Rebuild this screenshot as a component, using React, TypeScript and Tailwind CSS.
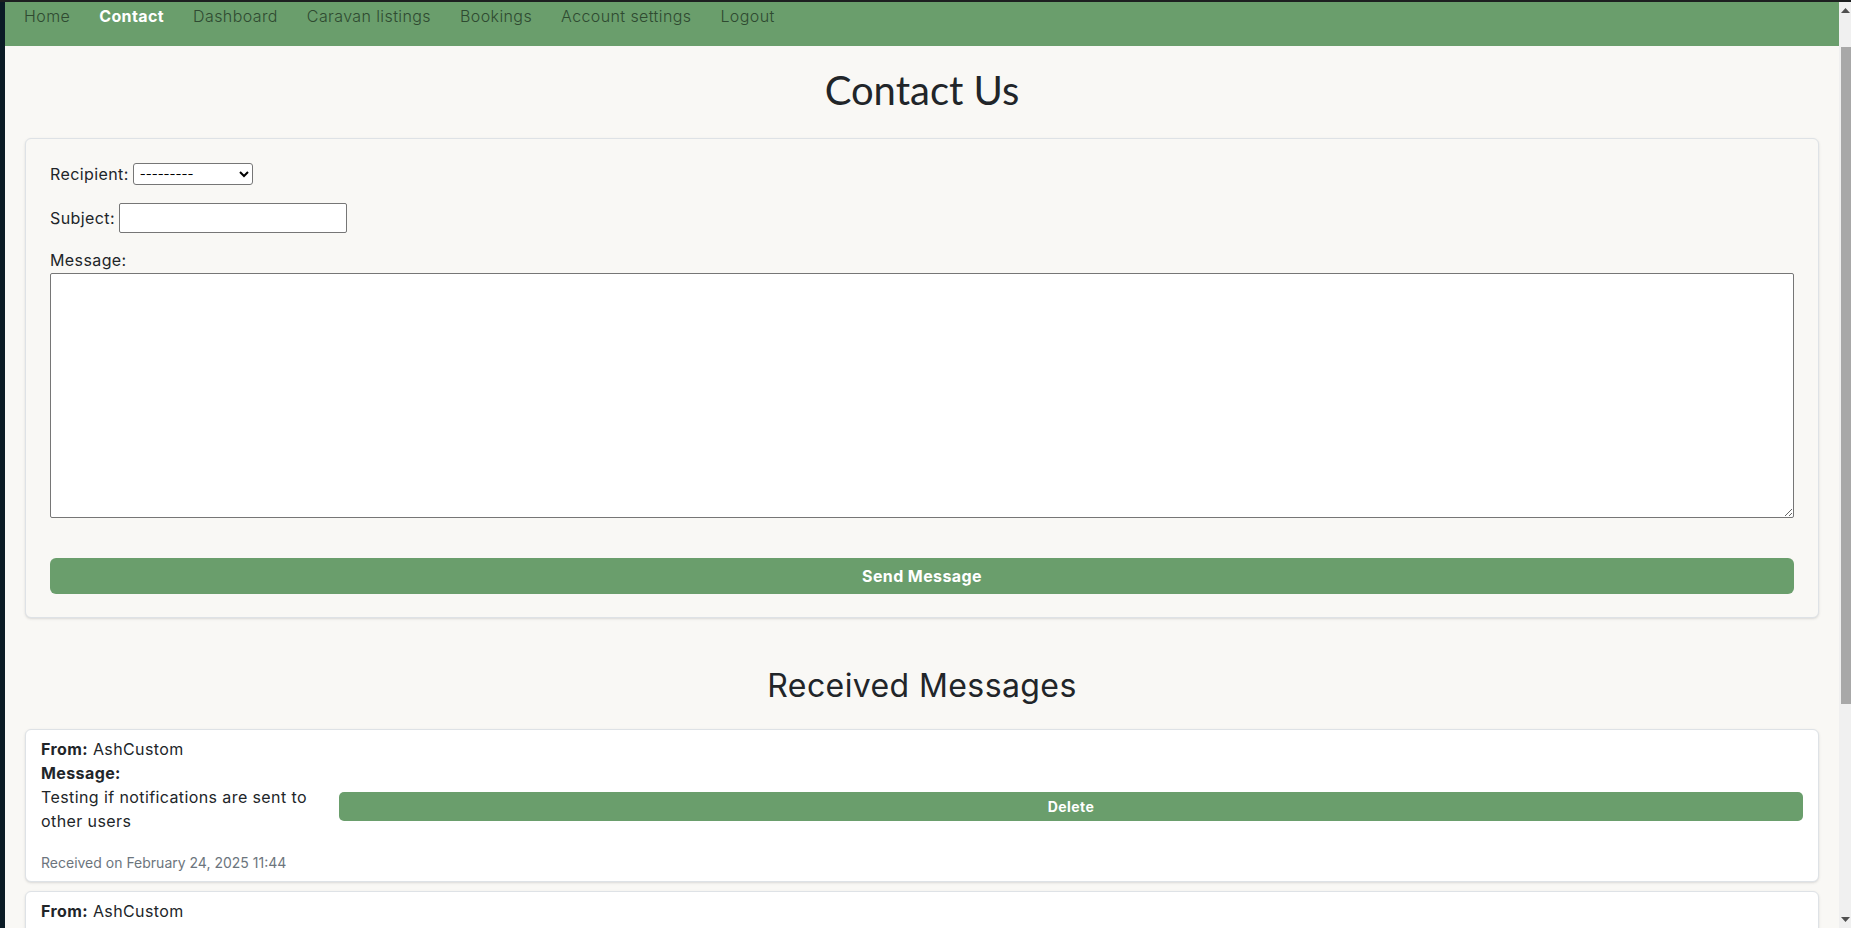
import React from "react";

const navLinks = [
  { label: "Home", active: false },
  { label: "Contact", active: true },
  { label: "Dashboard", active: false },
  { label: "Caravan listings", active: false },
  { label: "Bookings", active: false },
  { label: "Account settings", active: false },
  { label: "Logout", active: false },
];

const messages = [
  {
    from: "AshCustom",
    body: "Testing if notifications are sent to other users",
    received: "Received on February 24, 2025 11:44",
  },
  {
    from: "AshCustom",
    body: "Testing if notifications are sent to other users",
    received: "Received on February 24, 2025 11:40",
  },
];

function Scrollbar() {
  return (
    <div className="w-[12px] shrink-0 bg-[#f0f0f0] flex flex-col">
      <div className="h-[17px] flex items-center justify-center">
        <svg width="9" height="6" viewBox="0 0 9 6">
          <polygon points="4.5,0 9,5 0,5" fill="#505050" />
        </svg>
      </div>
      <div className="flex-1 flex flex-col">
        <div className="h-[28px]" />
        <div className="ml-[2px] h-[657px] bg-[#a8a8a8]" />
      </div>
      <div className="h-[17px] flex items-center justify-center">
        <svg width="9" height="6" viewBox="0 0 9 6">
          <polygon points="0,0 9,0 4.5,5" fill="#505050" />
        </svg>
      </div>
    </div>
  );
}

function MessageCard({ from, body, received }: { from: string; body: string; received: string }) {
  return (
    <div className="mb-[9px] rounded-md border border-[#dee2e6] bg-white px-[15px] pt-[7px] pb-2 shadow-sm">
      <div className="leading-6">
        <span className="font-bold">From:</span> {from}
      </div>
      <div className="flex items-center gap-3">
        <div className="w-[286px] shrink-0 leading-6">
          <div className="font-bold">Message:</div>
          <div>{body}</div>
        </div>
        <button className="mt-[19px] h-[29px] flex-1 rounded-[5px] bg-[#6a9e6c] text-sm font-bold text-white">
          Delete
        </button>
      </div>
      <div className="mt-[19px] text-sm leading-[21px] tracking-normal text-[#6c757d]">{received}</div>
    </div>
  );
}

export default function App() {
  return (
    <div className="h-[928px] w-full overflow-hidden flex flex-col bg-[#0c1922] font-[Inter,sans-serif] tracking-[0.025em] text-[#212529]">
      <div className="h-[2px] shrink-0 bg-[#1d1f20]" />
      <div className="flex flex-1 min-h-0">
        <div className="w-[5px] shrink-0 bg-[#0b1b25]" />
        <main className="flex-1 min-w-0 overflow-hidden bg-[#f9f8f5]">
          <nav className="h-[44px] bg-[#6a9e6c] pl-[19px] pt-[2px]">
            <ul className="flex gap-[29px] leading-6">
              {navLinks.map((l) => (
                <li
                  key={l.label}
                  className={l.active ? "font-bold text-white" : "font-light text-[#2f4a31]"}
                >
                  {l.label}
                </li>
              ))}
            </ul>
          </nav>

          <div className="px-5">
            <h1 className="mt-[20px] mb-[24px] text-center font-[Lato,sans-serif] text-[40px] leading-[48px] tracking-normal">
              Contact Us
            </h1>

            <form className="rounded-md border border-[#dee2e6] bg-[#f9f8f5] px-6 pt-[23px] pb-[23px] shadow-sm">
              <div className="flex h-6 items-center gap-1">
                <label>Recipient:</label>
                <select className="h-[22px] w-[120px] rounded-[3px] border border-[#767676] bg-white px-[2px] text-[13px] tracking-normal text-black">
                  <option>---------</option>
                </select>
              </div>
              <div className="mt-4 flex h-8 items-center gap-1">
                <label>Subject:</label>
                <input
                  type="text"
                  className="h-[30px] w-[228px] rounded-[2px] border border-[#767676] bg-white"
                />
              </div>
              <div className="mt-[14px] leading-6">Message:</div>
              <textarea className="mt-[1px] block h-[245px] w-full rounded-[2px] border border-[#767676] bg-white" />
              <button
                type="button"
                className="mt-10 h-9 w-full rounded-md bg-[#6a9e6c] font-bold text-white"
              >
                Send Message
              </button>
            </form>

            <h2 className="mt-[49px] mb-[24px] text-center text-[32px] leading-[38px]">
              Received Messages
            </h2>

            {messages.map((m, i) => (
              <MessageCard key={i} {...m} />
            ))}
          </div>
        </main>
        <Scrollbar />
      </div>
    </div>
  );
}
